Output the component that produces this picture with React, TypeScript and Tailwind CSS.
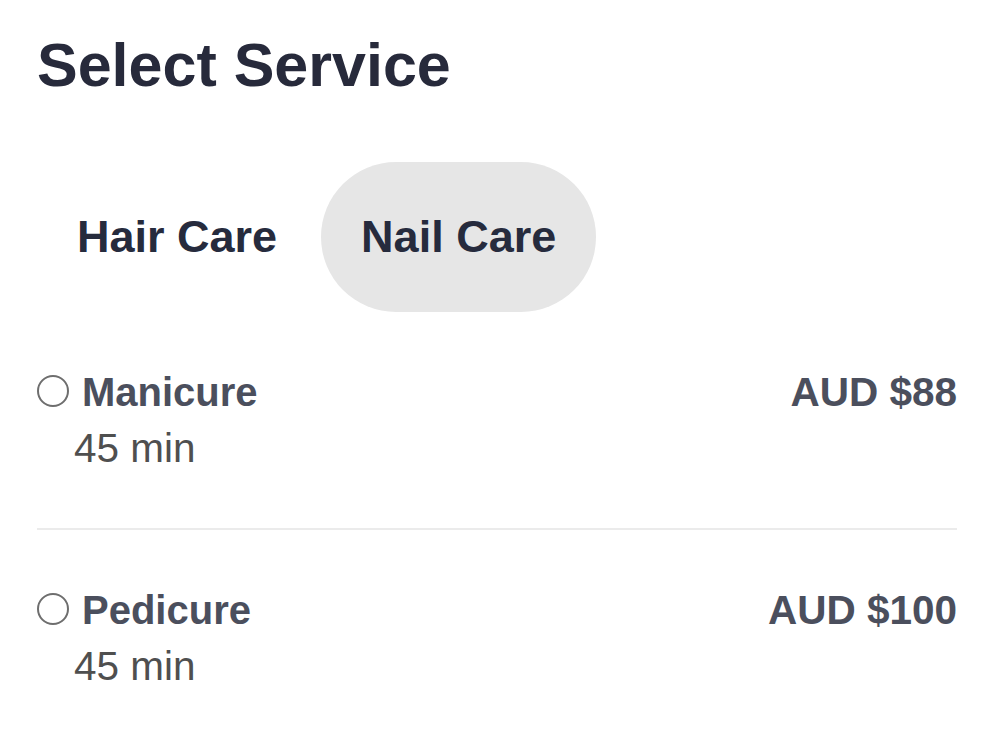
import React, { useState } from "react";

type Service = { name: string; duration: string; price: string };

const services: Service[] = [
  { name: "Manicure", duration: "45 min", price: "AUD $88" },
  { name: "Pedicure", duration: "45 min", price: "AUD $100" },
];

export default function App() {
  const [tab, setTab] = useState("Nail Care");
  return (
    <div
      className="min-h-[738px] w-[1000px] bg-white pl-[37px] pr-[43px] pt-[31px]"
      style={{ fontFamily: '"Liberation Sans", Arial, sans-serif' }}
    >
      <h1 className="text-[61px] font-bold leading-[69px] text-[#272a3b]">
        Select Service
      </h1>
      <div className="mt-[62px] flex gap-[4px]">
        {["Hair Care", "Nail Care"].map((t) => (
          <button
            key={t}
            onClick={() => setTab(t)}
            className={`flex h-[150px] items-center rounded-full px-[40px] text-[45px] font-bold leading-[52px] text-[#262b3d] ${
              tab === t ? "bg-[#e6e6e6]" : "bg-transparent"
            }`}
          >
            {t}
          </button>
        ))}
      </div>
      <div className="flex flex-col">
        {services.map((s, i) => (
          <div
            key={s.name}
            className={`flex items-start justify-between py-[52px] ${
              i < services.length - 1 ? "border-b-2 border-[#ebebeb]" : ""
            }`}
          >
            <div className="flex flex-col">
              <div className="flex items-center gap-[13px]">
                <span className="mt-[-3px] box-border h-[32px] w-[32px] rounded-full border-[2.5px] border-[#6e6e6e] bg-white" />
                <span className="text-[40px] font-bold leading-[56px] text-[#4b4f5d]">
                  {s.name}
                </span>
              </div>
              <span className="ml-[37px] text-[40.5px] leading-[56px] text-[#4f4f4f]">
                {s.duration}
              </span>
            </div>
            <span className="text-[40.5px] font-bold leading-[56px] text-[#4b4f5d]">
              {s.price}
            </span>
          </div>
        ))}
      </div>
    </div>
  );
}
